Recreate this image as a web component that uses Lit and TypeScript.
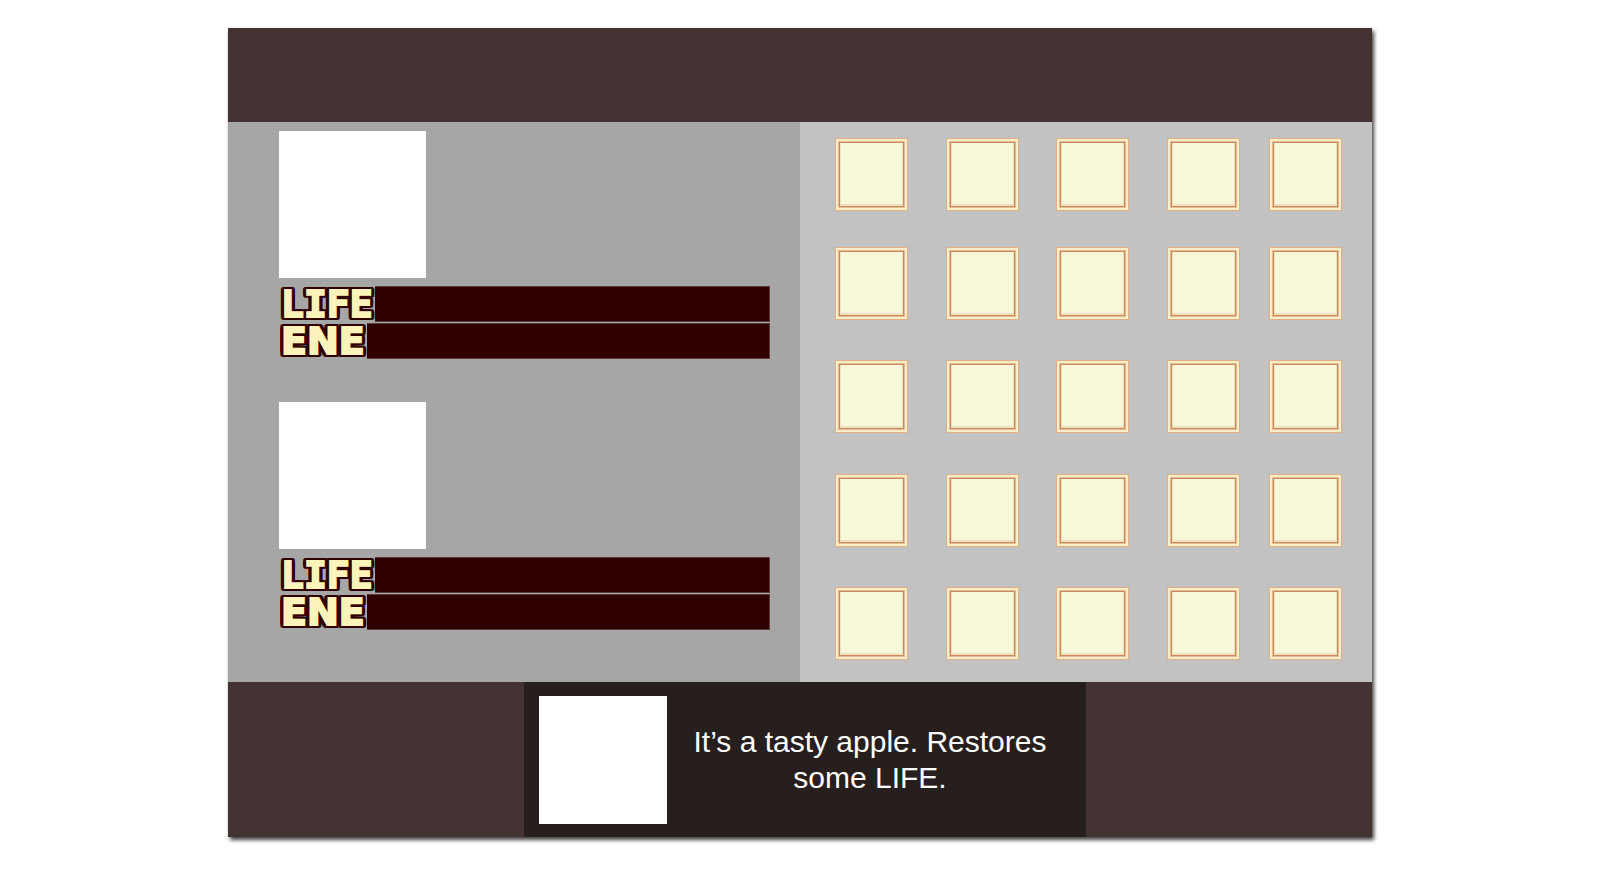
import { LitElement, html, css } from "lit";
import { customElement, property } from "lit/decorators.js";

@customElement("stat-bar")
class StatBar extends LitElement {
  @property() label = "";
  @property({ reflect: true }) face = "mono";

  static styles = css`
    :host {
      display: flex;
      height: 36px;
    }
    .label {
      padding: 0 2px;
      font: bold 38px/36px "DejaVu Sans Mono", monospace;
      color: #fbf3b9;
      -webkit-text-stroke: 2px #fbf3b9;
      white-space: nowrap;
      position: relative;
      z-index: 1;
      text-shadow: 4px 0 #300000, -4px 0 #300000, 0 3px #300000, 0 -3px #300000,
        3px 3px #300000, -3px 3px #300000, 3px -3px #300000, -3px -3px #300000,
        4px 2px #300000, -4px 2px #300000, 4px -2px #300000, -4px -2px #300000;
    }
    :host([face="wide"]) .label {
      font-family: "DejaVu Sans", sans-serif;
    }
    .track {
      flex: 1;
      box-sizing: border-box;
      background: #300000;
      border: 1px solid #5e3c3c;
      border-left: 0;
    }
  `;

  render() {
    return html`<span class="label">${this.label}</span><span class="track"></span>`;
  }
}

@customElement("character-card")
class CharacterCard extends LitElement {
  static styles = css`
    :host {
      display: block;
    }
    .portrait {
      width: 147px;
      height: 147px;
      background: #fff;
      margin-bottom: 8px;
    }
    .stats {
      display: grid;
      gap: 1px;
    }
  `;

  render() {
    return html`
      <div class="portrait"></div>
      <div class="stats">
        <stat-bar label="LIFE"></stat-bar>
        <stat-bar label="ENE" face="wide"></stat-bar>
      </div>
    `;
  }
}

@customElement("app-root")
class AppRoot extends LitElement {
  static styles = css`
    :host {
      display: block;
      padding: 28px 0 32px;
      background: #fff;
      font-family: "Liberation Sans", Arial, sans-serif;
    }
    .menu {
      width: 71.5%;
      margin: 0 auto;
      background: #433433;
      box-shadow: 2px 3px 4px rgba(0, 0, 0, 0.75);
    }
    .top {
      height: 94px;
    }
    .body {
      display: grid;
      grid-template-columns: 1fr 1fr;
    }
    .party {
      display: flex;
      flex-direction: column;
      gap: 43px;
      padding: 9px 30px 52px 51px;
      background: #a6a6a6;
    }
    .bag {
      display: grid;
      grid-template-columns: 111fr 110fr 111fr 102fr 73px;
      grid-template-rows: 109fr 113fr 114fr 113fr 73px;
      padding: 16px 30px 22px 35px;
      background: #c2c2c2;
    }
    .slot {
      box-sizing: border-box;
      width: 73px;
      height: 73px;
      padding: 3px;
      border: 1px solid #e0b083;
      background: #f6eecb;
      display: flex;
    }
    .inner {
      flex: 1;
      align-self: stretch;
      box-sizing: border-box;
      border: 1px solid #c98a5c;
      background: #f6f8d9;
      box-shadow: 0 0 0 1px #e2bd94, inset 0 -1px 0 1px #f0e0c0;
    }
    .bottom {
      display: grid;
      grid-template-columns: 296fr 562px 286fr;
    }
    .info {
      grid-column: 2;
      display: flex;
      align-items: center;
      gap: 15px;
      box-sizing: border-box;
      padding: 14px 28px 13px 15px;
      background: #271f1e;
    }
    .item {
      flex: none;
      width: 128px;
      height: 128px;
      background: #fff;
    }
    .text {
      flex: 1;
      margin: 0;
      color: #fff;
      font-size: 30px;
      line-height: 36px;
      text-align: center;
    }
  `;

  render() {
    const slots = Array.from({ length: 25 }, (_, i) => i + 1);
    return html`
      <main class="menu">
        <header class="top"></header>
        <div class="body">
          <section class="party">
            <character-card></character-card>
            <character-card></character-card>
          </section>
          <section class="bag">
            ${slots.map(
              (n) => html`<button class="slot" aria-label="Slot ${n}"><span class="inner"></span></button>`
            )}
          </section>
        </div>
        <footer class="bottom">
          <div class="info">
            <div class="item"></div>
            <p class="text">It’s a tasty apple. Restores some LIFE.</p>
          </div>
        </footer>
      </main>
    `;
  }
}
